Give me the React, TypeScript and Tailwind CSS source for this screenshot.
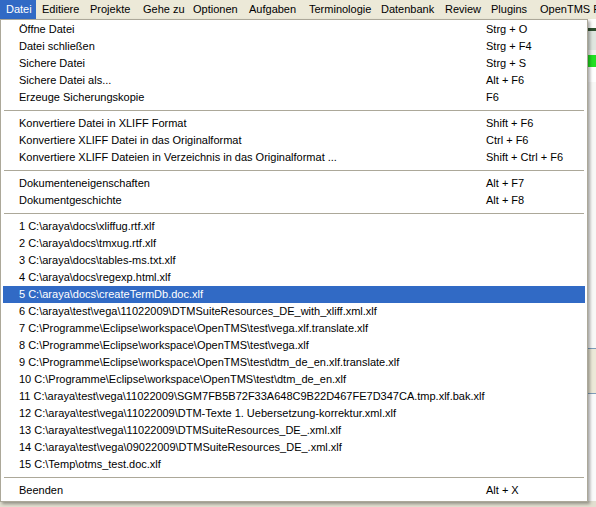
import React from "react";

const menuBar = [
  { label: "Datei", w: "w-[36px]", active: true },
  { label: "Editiere", w: "w-[48px]" },
  { label: "Projekte", w: "w-[53px]" },
  { label: "Gehe zu", w: "w-[50px]" },
  { label: "Optionen", w: "w-[56px]" },
  { label: "Aufgaben", w: "w-[60px]" },
  { label: "Terminologie", w: "w-[72px]" },
  { label: "Datenbank", w: "w-[64px]" },
  { label: "Review", w: "w-[46px]" },
  { label: "Plugins", w: "w-[49px]" },
  { label: "OpenTMS Plu", w: "w-[90px]" },
];

type Entry = { label: string; key?: string; active?: boolean } | "sep";

const entries: Entry[] = [
  { label: "Öffne Datei", key: "Strg + O" },
  { label: "Datei schließen", key: "Strg + F4" },
  { label: "Sichere Datei", key: "Strg + S" },
  { label: "Sichere Datei als...", key: "Alt + F6" },
  { label: "Erzeuge Sicherungskopie", key: "F6" },
  "sep",
  { label: "Konvertiere Datei in XLIFF Format", key: "Shift + F6" },
  { label: "Konvertiere XLIFF Datei in das Originalformat", key: "Ctrl + F6" },
  { label: "Konvertiere XLIFF Dateien in Verzeichnis in das Originalformat ...", key: "Shift + Ctrl + F6" },
  "sep",
  { label: "Dokumenteneigenschaften", key: "Alt + F7" },
  { label: "Dokumentgeschichte", key: "Alt + F8" },
  "sep",
  { label: "1 C:\\araya\\docs\\xliffug.rtf.xlf" },
  { label: "2 C:\\araya\\docs\\tmxug.rtf.xlf" },
  { label: "3 C:\\araya\\docs\\tables-ms.txt.xlf" },
  { label: "4 C:\\araya\\docs\\regexp.html.xlf" },
  { label: "5 C:\\araya\\docs\\createTermDb.doc.xlf", active: true },
  { label: "6 C:\\araya\\test\\vega\\11022009\\DTMSuiteResources_DE_with_xliff.xml.xlf" },
  { label: "7 C:\\Programme\\Eclipse\\workspace\\OpenTMS\\test\\vega.xlf.translate.xlf" },
  { label: "8 C:\\Programme\\Eclipse\\workspace\\OpenTMS\\test\\vega.xlf" },
  { label: "9 C:\\Programme\\Eclipse\\workspace\\OpenTMS\\test\\dtm_de_en.xlf.translate.xlf" },
  { label: "10 C:\\Programme\\Eclipse\\workspace\\OpenTMS\\test\\dtm_de_en.xlf" },
  { label: "11 C:\\araya\\test\\vega\\11022009\\SGM7FB5B72F33A648C9B22D467FE7D347CA.tmp.xlf.bak.xlf" },
  { label: "12 C:\\araya\\test\\vega\\11022009\\DTM-Texte 1. Uebersetzung-korrektur.xml.xlf" },
  { label: "13 C:\\araya\\test\\vega\\11022009\\DTMSuiteResources_DE_.xml.xlf" },
  { label: "14 C:\\araya\\test\\vega\\09022009\\DTMSuiteResources_DE_.xml.xlf" },
  { label: "15 C:\\Temp\\otms_test.doc.xlf" },
  "sep",
  { label: "Beenden", key: "Alt + X" },
];

export default function App() {
  return (
    <div className="relative w-[596px] h-[507px] overflow-hidden bg-[#fafaf8] text-[11px] leading-[13px] text-black font-['Liberation_Sans',Arial,sans-serif]">
      {/* menu bar */}
      <div className="flex h-[19px] bg-[#ece9d8] overflow-hidden">
        {menuBar.map((m) => (
          <div
            key={m.label}
            className={`${m.w} shrink-0 flex items-center pl-[6px] whitespace-nowrap ${m.active ? "bg-[#316ac5] text-white" : ""}`}
          >
            {m.label}
          </div>
        ))}
      </div>

      {/* application behind the menu */}
      <div className="flex flex-col">
        <div className="h-[9px] bg-[#fdfdfb]" />
        <div className="h-[3px] bg-[#2f4f2f]" />
        <div className="h-[19px] bg-[#dfe6df]" />
        <div className="h-[5px] bg-[#f0f0ec]" />
        <div className="h-[12px] bg-[#22e022]" />
        <div className="h-[5px] bg-white" />
        <div className="h-[10px] bg-white" />
        <div className="h-[266px] bg-[#f8f8f6]" />
        <div className="h-px bg-[#7f9db9]" />
        <div className="h-[44px] bg-[#ece9d8]" />
        <div className="h-px bg-[#7f9db9]" />
        <div className="h-[107px] bg-[#fafafa]" />
        <div className="h-[6px] bg-[#e2dfd0]" />
      </div>

      {/* dropdown */}
      <div className="absolute left-0 top-[19px] w-[588px] border border-[#aca899] bg-white px-[2px] pt-px pb-[2px] shadow-[2px_2px_3px_rgba(0,0,0,0.35)]">
        {entries.map((e, i) =>
          e === "sep" ? (
            <div key={i} className="h-[9px] flex items-center px-px">
              <div className="h-px w-full bg-[#aca899]" />
            </div>
          ) : (
            <div
              key={i}
              className={`flex h-[17px] items-center whitespace-nowrap ${e.active ? "bg-[#316ac5] text-white" : ""}`}
            >
              <span className="pl-[16px] w-[483px] shrink-0">{e.label}</span>
              {e.key && <span>{e.key}</span>}
            </div>
          )
        )}
      </div>
    </div>
  );
}
